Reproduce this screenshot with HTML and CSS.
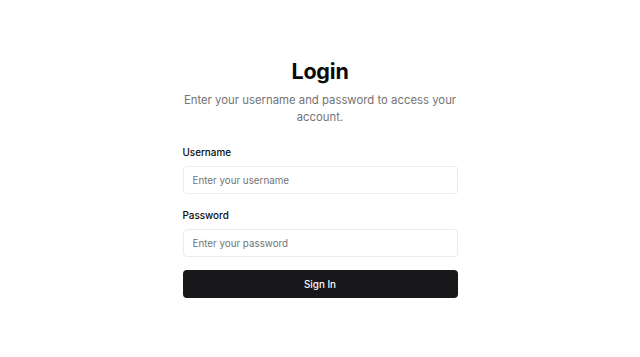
FILE: index.html
```html
<!DOCTYPE html>
<html lang="en">
<head>
<meta charset="utf-8">
<title>Login</title>
<link rel="stylesheet" href="styles.css">
</head>
<body>
<main class="page">
  <section class="card">
    <h1 class="title">Login</h1>
    <p class="subtitle">Enter your username and password to access your account.</p>
    <form class="form">
      <div class="field">
        <label class="label" for="username">Username</label>
        <input class="input" id="username" type="text" placeholder="Enter your username">
      </div>
      <div class="field">
        <label class="label" for="password">Password</label>
        <input class="input" id="password" type="password" placeholder="Enter your password">
      </div>
      <button class="button" type="button">Sign In</button>
    </form>
  </section>
</main>
</body>
</html>
```
FILE: styles.css
```css
* { box-sizing: border-box; }
html, body { margin: 0; padding: 0; background: #ffffff; }
body {
  font-family: Inter, "Noto Sans", "Liberation Sans", sans-serif;
  color: #0a0a0a;
}
.page {
  display: flex;
  justify-content: center;
  padding-top: 59px;
}
.card {
  width: 275px;
  display: flex;
  flex-direction: column;
}
.title {
  margin: 0;
  font-size: 21.5px;
  line-height: 25px;
  font-weight: 700;
  letter-spacing: -0.2px;
  text-align: center;
  color: #0a0a0a;
}
.subtitle {
  margin: 7.5px 0 0;
  font-size: 11.35px;
  line-height: 17.2px;
  text-align: center;
  color: #737373;
}
.form {
  margin-top: 19.5px;
  display: flex;
  flex-direction: column;
  gap: 14px;
}
.field {
  display: flex;
  flex-direction: column;
  gap: 7px;
}
.label {
  font-size: 9.9px;
  line-height: 14px;
  font-weight: 500;
  color: #0a0a0a;
}
.input {
  height: 28px;
  padding: 0 9px;
  border: 1px solid #ebebeb;
  border-radius: 4px;
  font-family: inherit;
  font-size: 9.8px;
  color: #0a0a0a;
  background: #fff;
  outline: none;
}
.input::placeholder { color: #737373; }
.button {
  height: 28px;
  margin-top: -1px;
  border: none;
  border-radius: 4px;
  background: #18181b;
  color: #fafafa;
  font-family: inherit;
  font-size: 9.8px;
  font-weight: 500;
}
```
